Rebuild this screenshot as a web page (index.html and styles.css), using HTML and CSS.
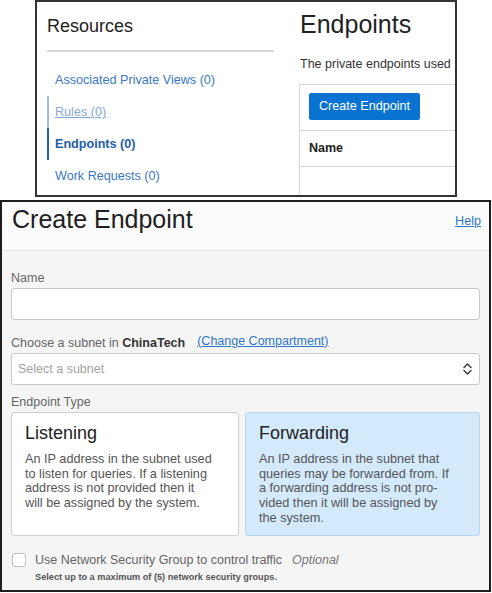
FILE: index.html
```html
<!DOCTYPE html>
<html lang="en">
<head>
<meta charset="utf-8">
<title>Create Endpoint</title>
<link rel="stylesheet" href="styles.css">
</head>
<body>
<section class="top">
  <aside class="side">
    <h2 class="side-title">Resources</h2>
    <div class="side-rule"></div>
    <nav class="side-nav">
      <a class="nav-item" href="#">Associated Private Views (0)</a>
      <a class="nav-item nav-hover" href="#">Rules (0)</a>
      <a class="nav-item nav-active" href="#">Endpoints (0)</a>
      <a class="nav-item" href="#">Work Requests (0)</a>
    </nav>
  </aside>
  <div class="main">
    <h1 class="main-title">Endpoints</h1>
    <p class="main-desc">The private endpoints used</p>
    <div class="table">
      <div class="toolbar"><span class="btn">Create Endpoint</span></div>
      <div class="thead">Name</div>
      <div class="tbody"></div>
    </div>
  </div>
</section>

<section class="dialog">
  <header class="dialog-head">
    <h2 class="dialog-title">Create Endpoint</h2>
    <a class="help" href="#">Help</a>
  </header>
  <div class="dialog-body">
    <div class="label">Name</div>
    <div class="input"></div>
    <div class="label label-gap">Choose a subnet in <b class="strong">ChinaTech</b><a class="link" href="#">(Change Compartment)</a></div>
    <div class="select">
      <span class="placeholder">Select a subnet</span>
      <svg class="chev" width="9" height="14" viewBox="0 0 9 14"><path d="M1 5.5 L4.5 2 L8 5.5 M1 8.5 L4.5 12 L8 8.5" fill="none" stroke="#333" stroke-width="1.4" stroke-linecap="round" stroke-linejoin="round"/></svg>
    </div>
    <div class="label label-type">Endpoint Type</div>
    <div class="cards">
      <div class="card">
        <div class="card-title">Listening</div>
        <div class="card-text">An IP address in the subnet used<br>to listen for queries. If a listening<br>address is not provided then it<br>will be assigned by the system.</div>
      </div>
      <div class="card card-selected">
        <div class="card-title">Forwarding</div>
        <div class="card-text">An IP address in the subnet that<br>queries may be forwarded from. If<br>a forwarding address is not pro-<br>vided then it will be assigned by<br>the system.</div>
      </div>
    </div>
    <div class="check-row">
      <span class="checkbox"></span>
      <span class="check-text">Use Network Security Group to control traffic</span>
      <span class="optional">Optional</span>
    </div>
    <div class="hint">Select up to a maximum of (5) network security groups.</div>
  </div>
</section>
</body>
</html>
```

FILE: styles.css
```css
html, body {
  margin: 0;
  padding: 0;
}
body {
  width: 492px;
  height: 593px;
  overflow: hidden;
  background: #fff;
  font-family: "Liberation Sans", Arial, sans-serif;
  color: #222;
}

/* ---------- top panel ---------- */
.top {
  margin-left: 35px;
  width: 422px;
  height: 197px;
  border: 2px solid #333;
  box-sizing: border-box;
  display: flex;
  overflow: hidden;
  background: #fff;
}
.side {
  flex: none;
  width: 251px;
  padding: 14px 14px 0 10px;
  box-sizing: border-box;
}
.side-title {
  margin: 0;
  font-size: 18px;
  line-height: 21px;
  font-weight: normal;
  color: #222;
}
.side-rule {
  height: 2px;
  background: #d9d9d9;
  margin-top: 13px;
}
.side-nav {
  margin-top: 12px;
  display: flex;
  flex-direction: column;
}
.nav-item {
  display: block;
  height: 32px;
  line-height: 32px;
  padding-left: 6px;
  border-left: 2px solid transparent;
  font-size: 12.6px;
  color: #3a78c5;
  text-decoration: none;
  white-space: nowrap;
}
.nav-hover {
  color: #86a8d8;
  text-decoration: underline;
  border-left-color: #9dbbe3;
}
.nav-active {
  color: #1c5eab;
  font-weight: bold;
  border-left-color: #1f62b3;
}
.main {
  flex: 1;
  min-width: 0;
  padding: 7px 0 0 12px;
  overflow: hidden;
}
.main-title {
  margin: 0;
  font-size: 25px;
  line-height: 30px;
  font-weight: normal;
  color: #222;
  white-space: nowrap;
}
.main-desc {
  margin: 17px 0 0;
  font-size: 12.5px;
  line-height: 16px;
  color: #333;
  white-space: nowrap;
}
.table {
  margin: 12px 0 0 -1px;
  width: 300px;
  border: 1px solid #d8d8d8;
  border-right: none;
}
.toolbar {
  padding: 8px 9px 10px;
  border-bottom: 1px solid #d8d8d8;
}
.btn {
  display: inline-block;
  height: 27px;
  line-height: 27px;
  padding: 0 10px;
  background: #0a72d0;
  color: #fff;
  border-radius: 2px;
  font-size: 12.6px;
}
.thead {
  height: 35px;
  line-height: 35px;
  padding-left: 9px;
  font-weight: bold;
  font-size: 12.5px;
  color: #222;
  border-bottom: 1px solid #d8d8d8;
}
.tbody {
  height: 40px;
}

/* ---------- dialog ---------- */
.dialog {
  margin-top: 3px;
  width: 491px;
  height: 392px;
  border: 2px solid #1e1e1e;
  box-sizing: border-box;
  background: #f5f5f5;
}
.dialog-head {
  display: flex;
  justify-content: space-between;
  align-items: flex-start;
  height: 49px;
  box-sizing: border-box;
  padding: 2px 8px 0 10px;
  border-bottom: 1px solid #e3e3e3;
  background: #fbfbfb;
}
.dialog-title {
  margin: 0;
  font-size: 25px;
  line-height: 30px;
  font-weight: normal;
  color: #1e1e1e;
}
.help {
  margin-top: 9px;
  font-size: 12.6px;
  line-height: 16px;
  color: #2f78c9;
  text-decoration: underline;
}
.dialog-body {
  padding: 19px 9px 0 9px;
}
.label {
  font-size: 12.5px;
  line-height: 16px;
  height: 16px;
  color: #666;
  white-space: nowrap;
}
.label-gap {
  margin-top: 13px;
}
.label-type {
  margin-top: 9px;
}
.strong {
  color: #333;
}
.link {
  margin-left: 12px;
  color: #2f78c9;
  text-decoration: underline;
  vertical-align: 2px;
}
.input {
  margin-top: 2px;
  height: 32px;
  box-sizing: border-box;
  border: 1px solid #c9c9c9;
  border-radius: 3px;
  background: #fff;
}
.select {
  margin-top: 4px;
  height: 32px;
  box-sizing: border-box;
  border: 1px solid #c9c9c9;
  border-radius: 3px;
  background: #fff;
  display: flex;
  align-items: center;
  justify-content: space-between;
  padding: 0 7px 0 6px;
}
.placeholder {
  font-size: 12.5px;
  color: #a3a3a3;
}
.chev {
  display: block;
}
.cards {
  margin-top: 2px;
  display: grid;
  grid-template-columns: 228px 1fr;
  column-gap: 6px;
  height: 124px;
}
.card {
  border: 1px solid #cfcfcf;
  border-radius: 3px;
  background: #fff;
  padding: 9px 12px 0 13px;
}
.card-selected {
  background: #d3e9fc;
  border-color: #b7d4ef;
}
.card-title {
  font-size: 18px;
  line-height: 22px;
  color: #222;
}
.card-text {
  margin-top: 8px;
  font-size: 12.7px;
  line-height: 14.7px;
  color: #555;
  white-space: nowrap;
}
.check-row {
  margin-top: 16px;
  display: flex;
  align-items: center;
  height: 16px;
}
.checkbox {
  width: 14px;
  height: 14px;
  box-sizing: border-box;
  border: 1px solid #bdbdbd;
  border-radius: 3px;
  background: #fff;
  margin-left: 1px;
}
.check-text {
  margin-left: 9px;
  font-size: 12.5px;
  line-height: 16px;
  color: #666;
  white-space: nowrap;
}
.optional {
  margin-left: 10px;
  font-size: 12.5px;
  font-style: italic;
  color: #777;
}
.hint {
  margin-top: 3px;
  padding-left: 24px;
  font-size: 9.2px;
  line-height: 12px;
  font-weight: bold;
  color: #555;
  white-space: nowrap;
}
```
